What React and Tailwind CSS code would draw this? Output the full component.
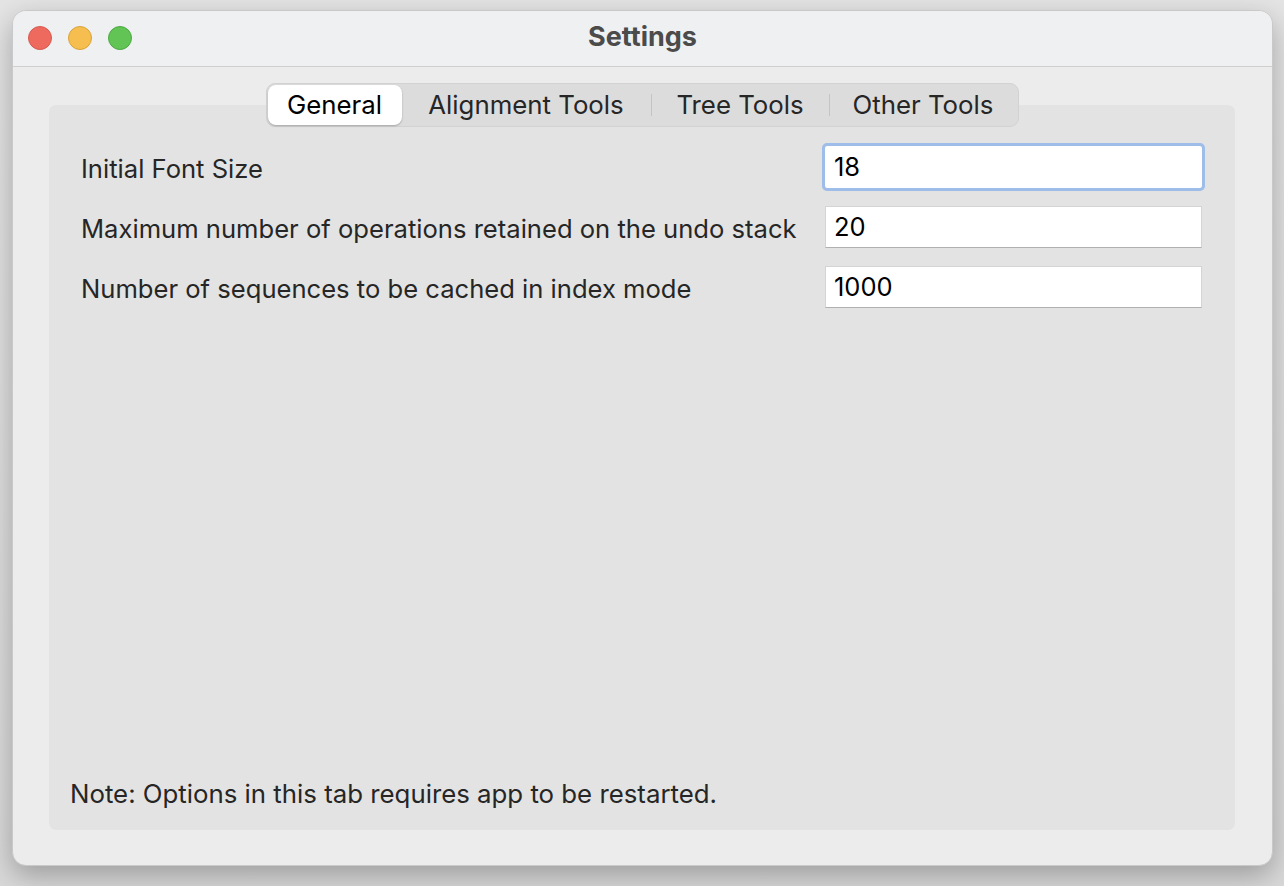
export default function App() {
  const font = { fontFamily: 'Inter, "Noto Sans", sans-serif' };
  const rows = [
    { label: "Initial Font Size", value: "18", focused: true },
    { label: "Maximum number of operations retained on the undo stack", value: "20" },
    { label: "Number of sequences to be cached in index mode", value: "1000" },
  ];
  return (
    <div
      className="w-[1284px] h-[886px] bg-[linear-gradient(180deg,#e4e4e4_0%,#d9d9d9_100%)] pt-[10px] pl-[12px] overflow-hidden"
      style={font}
    >
      <div className="w-[1261px] h-[856px] rounded-[14px] bg-[#ececec] border border-[#c9c9c9] shadow-[0_10px_28px_rgba(0,0,0,0.28)] flex flex-col overflow-hidden">
        <div className="h-[56px] shrink-0 bg-[#eff0f2] border-b border-[#cfcfcf] relative flex items-center justify-center">
          <div className="absolute left-[15px] top-[15px] flex gap-[16px]">
            <div className="w-[24px] h-[24px] rounded-full bg-[#ee6a5f] border border-[#d65a50]" />
            <div className="w-[24px] h-[24px] rounded-full bg-[#f5be4f] border border-[#d9a33d]" />
            <div className="w-[24px] h-[24px] rounded-full bg-[#61c454] border border-[#4ea944]" />
          </div>
          <div className="text-[27px] font-bold text-[#4b4b4b] -mt-[2px]">Settings</div>
        </div>
        <div className="flex-1 pt-[38px] pl-[36px] pr-[37px] pb-[35px] flex">
          <div className="flex-1 bg-[#e3e3e3] rounded-[7px] flex flex-col">
            <div className="self-center -mt-[22px] h-[44px] flex items-center bg-[#dcdcdc] border border-[#d2d2d2] rounded-[9px] px-[1px] text-[25.8px] text-[#262626]">
              <div className="h-[40px] w-[134px] bg-white rounded-[8px] shadow-[0_1px_2px_rgba(0,0,0,0.25)] flex items-center justify-center text-black">
                General
              </div>
              <div className="w-[249px] flex items-center justify-center">Alignment Tools</div>
              <div className="w-[1px] h-[22px] bg-[#c4c4c4]" />
              <div className="w-[177px] flex items-center justify-center">Tree Tools</div>
              <div className="w-[1px] h-[22px] bg-[#c4c4c4]" />
              <div className="w-[187px] flex items-center justify-center">Other Tools</div>
            </div>
            <div className="flex flex-col gap-[18px] mt-[19px] pl-[32px] pr-[33px]">
              {rows.map((r) => (
                <div key={r.label} className="flex items-center justify-between h-[42px]">
                  <div className="text-[25.6px] text-[#262626] mt-[5px]">{r.label}</div>
                  <div
                    className={
                      r.focused
                        ? "w-[377px] h-[42px] bg-white outline-[3px] outline-[#9ebde9] rounded-[2px] flex items-center pl-[9px] text-[25.5px] text-black"
                        : "w-[377px] h-[42px] bg-white border border-[#d4d4d4] border-b-[#b0b0b0] flex items-center pl-[8px] text-[25.5px] text-black"
                    }
                  >
                    <span className="mt-[1px]">{r.value}</span>
                  </div>
                </div>
              ))}
            </div>
            <div className="flex-1" />
            <div className="pl-[21px] pb-[16px] text-[25.8px] text-[#262626]">
              Note: Options in this tab requires app to be restarted.
            </div>
          </div>
        </div>
      </div>
    </div>
  );
}
